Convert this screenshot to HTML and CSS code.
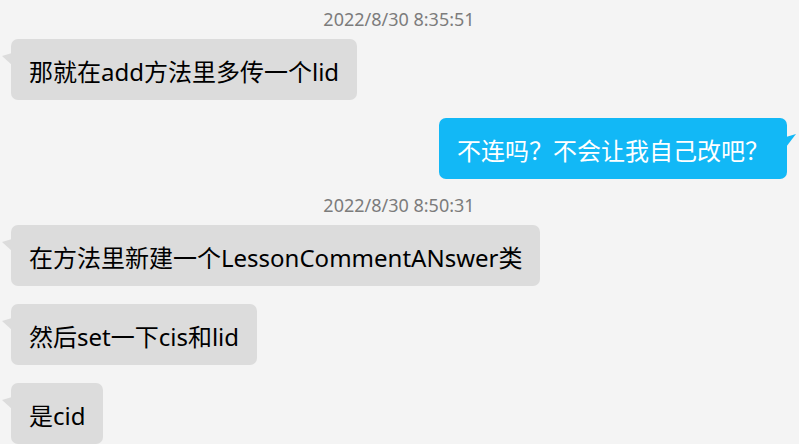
FILE: index.html
```html
<!DOCTYPE html>
<html lang="zh-CN">
<head>
<meta charset="utf-8">
<title>Chat</title>
<link rel="stylesheet" href="styles.css">
</head>
<body>
<div class="chat">
  <div class="time first">2022/8/30 8:35:51</div>
  <div class="row left"><div class="bubble gray">那就在add方法里多传一个lid</div></div>
  <div class="row right"><div class="bubble blue">不连吗？不会让我自己改吧？</div></div>
  <div class="time">2022/8/30 8:50:31</div>
  <div class="row left"><div class="bubble gray">在方法里新建一个LessonCommentANswer类</div></div>
  <div class="row left"><div class="bubble gray">然后set一下cis和lid</div></div>
  <div class="row left"><div class="bubble gray">是cid</div></div>
</div>
</body>
</html>
```
FILE: styles.css
```css
html, body {
  margin: 0;
  padding: 0;
  background: #f4f4f4;
}
body {
  width: 799px;
  height: 444px;
  overflow: hidden;
  font-family: "Noto Sans", "Noto Sans CJK SC", sans-serif;
}
.chat {
  display: flex;
  flex-direction: column;
  padding: 0 12px 0 11px;
}
.time {
  height: 20px;
  line-height: 20px;
  font-size: 18px;
  color: #7c7c7c;
  text-align: center;
  margin-top: 16px;
}
.time.first {
  margin-top: 9px;
}
.row {
  display: flex;
  margin-top: 18px;
}
.time + .row {
  margin-top: 10px;
}
.row.left { justify-content: flex-start; }
.row.right { justify-content: flex-end; }
.bubble {
  position: relative;
  font-size: 24px;
  line-height: 34px;
  padding: 16px 18px 11px;
  border-radius: 7px;
  white-space: nowrap;
}
.bubble.gray {
  background: #dcdcdc;
  color: #000;
}
.bubble.blue {
  background: #12b8f6;
  color: #fff;
}
.bubble::before {
  content: "";
  position: absolute;
  width: 10px;
}
.bubble.gray::before {
  left: -9px;
  top: 14px;
  height: 12px;
  background: #dcdcdc;
  clip-path: polygon(100% 0, 0 25%, 100% 100%);
}
.bubble.blue::before {
  right: -9px;
  top: 16px;
  height: 13px;
  background: #12b8f6;
  clip-path: polygon(0 23%, 100% 0, 0 100%);
}
```
